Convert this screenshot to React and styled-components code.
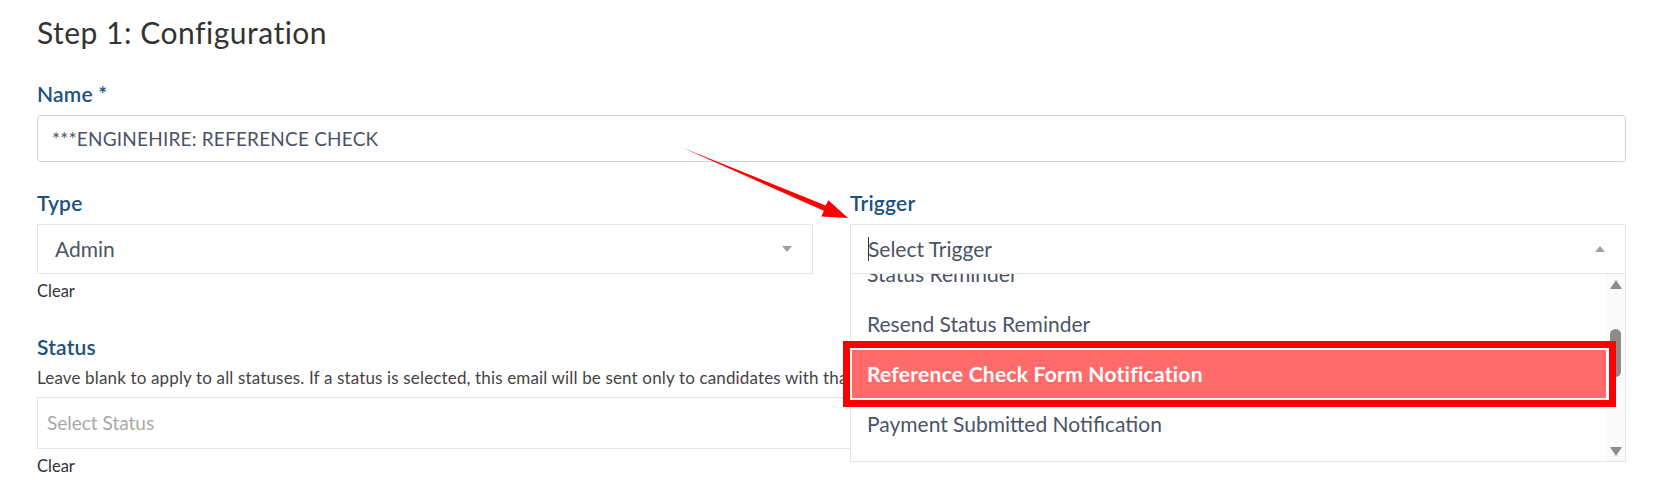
import styled, { createGlobalStyle } from 'styled-components';

const GlobalStyle = createGlobalStyle`
  * { box-sizing: border-box; }
  body {
    margin: 0;
    background: #fff;
    font-family: Lato, "Noto Sans", sans-serif;
  }
`;

// list is scrolled a little, so the first entry is half hidden
const triggerOptions = [
  'Status Reminder',
  'Resend Status Reminder',
  'Reference Check Form Notification',
  'Payment Submitted Notification',
];

const activeTrigger = 'Reference Check Form Notification';

export default function App() {
  return (
    <Page>
      <GlobalStyle />
      <Title>Step 1: Configuration</Title>

      <Field $top={32}>
        <Label>Name *</Label>
        <TextBox>***ENGINEHIRE: REFERENCE CHECK</TextBox>
      </Field>

      <Row>
        <Field $top={29}>
          <Label>Type</Label>
          <SelectBox>
            <SelectValue>Admin</SelectValue>
            <Caret />
          </SelectBox>
          <ClearLink>Clear</ClearLink>
        </Field>

        <Field $top={29}>
          <Label>Trigger</Label>
          <Dropdown>
            <SelectBox>
              <SelectValue>
                <TextCursor />
                Select Trigger
              </SelectValue>
              <Caret $up />
            </SelectBox>
            <Menu>
              <MenuViewport>
                <MenuList>
                  {triggerOptions.map((opt) => (
                    <Option key={opt} $active={opt === activeTrigger}>
                      {opt}
                    </Option>
                  ))}
                </MenuList>
              </MenuViewport>
              <Scrollbar>
                <ScrollArrow />
                <ScrollThumb />
                <ScrollArrow $down />
              </Scrollbar>
              <Callout />
            </Menu>
          </Dropdown>
        </Field>
      </Row>

      <Field $top={34}>
        <Label>Status</Label>
        <HelpText>
          Leave blank to apply to all statuses. If a status is selected, this email will be sent only to
          candidates with that status.
        </HelpText>
        <StatusBox>
          <Placeholder>Select Status</Placeholder>
        </StatusBox>
        <ClearLink>Clear</ClearLink>
      </Field>

      <ArrowOverlay width="1676" height="503" viewBox="0 0 1676 503">
        <polygon points="682,133.5 825.6,191.4 828.4,186.2 848,204 821.4,202.4 823.8,196.8" fill="#ff0000" />
      </ArrowOverlay>
    </Page>
  );
}

const Page = styled.div`
  position: relative;
  padding: 0 50px 40px 37px;
  min-height: 503px;
`;

const Title = styled.h1`
  margin: 14px 0 0;
  font-size: 30px;
  line-height: 36px;
  font-weight: 400;
  letter-spacing: 0.5px;
  color: #333;
`;

const Field = styled.div`
  display: flex;
  flex-direction: column;
  margin-top: ${(p) => p.$top}px;
`;

const Label = styled.label`
  font-size: 21px;
  line-height: 24px;
  font-weight: 600;
  letter-spacing: 0.2px;
  color: #21507e;
  margin-bottom: 9px;
`;

const TextBox = styled.div`
  display: flex;
  align-items: center;
  height: 47px;
  padding-left: 14px;
  border: 1px solid #cfd3d9;
  border-radius: 4px;
  font-size: 19px;
  line-height: 24px;
  letter-spacing: 0.2px;
  color: #4b5466;
`;

const Row = styled.div`
  display: grid;
  grid-template-columns: 1fr 1fr;
  column-gap: 37px;
  align-items: start;
`;

const Dropdown = styled.div`
  position: relative;
`;

const SelectBox = styled.div`
  display: flex;
  align-items: center;
  justify-content: space-between;
  height: 50px;
  padding: 0 20px 0 17px;
  border: 1px solid #e5e5e5;
  background: #fff;
`;

const SelectValue = styled.span`
  display: flex;
  align-items: center;
  font-size: 21px;
  line-height: 24px;
  color: #4b5466;
`;

const TextCursor = styled.span`
  width: 1px;
  height: 24px;
  margin-right: -1px;
  background: #333;
`;

const Caret = styled.span`
  width: 0;
  height: 0;
  border-left: 5.5px solid transparent;
  border-right: 5.5px solid transparent;
  ${(p) =>
    p.$up ? 'border-bottom: 6px solid #a0a0a0;' : 'border-top: 6px solid #a0a0a0;'}
`;

const ClearLink = styled.span`
  margin-top: 7px;
  font-size: 16.5px;
  line-height: 20px;
  color: #333;
`;

const HelpText = styled.p`
  margin: 0 0 9px;
  font-size: 17px;
  line-height: 20px;
  letter-spacing: 0.15px;
  color: #444;
  white-space: nowrap;
`;

const StatusBox = styled.div`
  display: flex;
  align-items: center;
  height: 52px;
  padding-left: 9px;
  border: 1px solid #e5e5e5;
`;

const Placeholder = styled.span`
  font-size: 19px;
  line-height: 24px;
  color: #a9a9a9;
`;

const Menu = styled.div`
  position: absolute;
  top: 100%;
  left: 0;
  right: 0;
  height: 188px;
  display: flex;
  background: #fff;
  border: 1px solid #e5e5e5;
  border-top: none;
  z-index: 2;
`;

const MenuViewport = styled.div`
  flex: 1;
  overflow: hidden;
`;

const MenuList = styled.div`
  margin-top: -25px;
`;

const Option = styled.div`
  display: flex;
  align-items: center;
  height: 50px;
  padding-left: 16px;
  font-size: 21px;
  line-height: 24px;
  font-weight: ${(p) => (p.$active ? 700 : 400)};
  letter-spacing: ${(p) => (p.$active ? '0.25px' : '0')};
  color: ${(p) => (p.$active ? '#fff' : '#4b5466')};
  background: ${(p) => (p.$active ? '#ff6b6b' : 'transparent')};
`;

const Scrollbar = styled.div`
  width: 19px;
  display: flex;
  flex-direction: column;
  align-items: center;
  background: #fafafa;
`;

const ScrollArrow = styled.span`
  width: 0;
  height: 0;
  border-left: 6.5px solid transparent;
  border-right: 6.5px solid transparent;
  ${(p) =>
    p.$down
      ? 'border-top: 9px solid #8f8f8f; margin-top: auto; margin-bottom: 5px;'
      : 'border-bottom: 9px solid #8f8f8f; margin-top: 6px;'}
`;

const ScrollThumb = styled.span`
  width: 11px;
  height: 48px;
  margin-top: 40px;
  border-radius: 6px;
  background: #8c8c8c;
`;

const Callout = styled.div`
  position: absolute;
  top: 67px;
  left: -8px;
  width: 773px;
  height: 66px;
  border: 7px solid #ff0000;
  box-shadow: inset 0 0 0 2px #fff;
  pointer-events: none;
`;

const ArrowOverlay = styled.svg`
  position: absolute;
  top: 0;
  left: 0;
  pointer-events: none;
  z-index: 3;
`;
